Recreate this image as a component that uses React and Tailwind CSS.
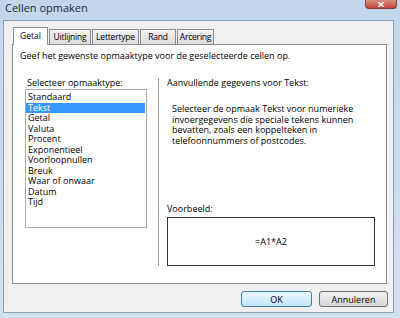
import React from 'react';

const font = { fontFamily: '"Open Sans", "Noto Sans", sans-serif' };

const types = [
  'Standaard', 'Tekst', 'Getal', 'Valuta', 'Procent', 'Exponentieel',
  'Voorloopnullen', 'Breuk', 'Waar of onwaar', 'Datum', 'Tijd',
];

// unselected tabs with their widths as measured from the picture
const tabs = [
  { label: 'Uitlijning', w: 'w-[42px]' },
  { label: 'Lettertype', w: 'w-[47px]' },
  { label: 'Rand', w: 'w-[36px]' },
  { label: 'Arcering', w: 'w-[37px]' },
];

export default function App() {
  return (
    <div
      className="w-[400px] h-[318px] overflow-hidden bg-gradient-to-b from-[#c3d5ea] to-[#d3e0ee] flex flex-col text-[9px] text-black"
      style={font}
    >
      {/* title bar */}
      <div className="h-[20px] flex items-start justify-between shrink-0">
        <span className="pl-[5px] pt-[1px] text-[11px] leading-[14px] text-[#1e2a38]">Cellen opmaken</span>
        <div className="mr-[3px] w-[32px] h-[9px] rounded-b-[4px] bg-gradient-to-b from-[#d98b7f] to-[#c2453a] border border-t-0 border-[#8a3a32] flex items-end justify-center pb-[1px]">
          <svg width="8" height="5" viewBox="0 0 8 5">
            <path d="M1 0 L4 2.5 L7 0 M1 5 L4 2.5 L7 5" stroke="white" strokeWidth="1.6" fill="none" />
          </svg>
        </div>
      </div>

      {/* dialog body */}
      <div className="mx-[3px] w-[391px] h-[293px] bg-[#f0f0f0] border border-[#8d9fb4] flex flex-col">
        {/* tabs */}
        <div className="flex items-end h-[23px] pl-[9px] shrink-0 text-[8.5px]">
          <div className="relative z-10 w-[35px] h-[18px] -mb-px bg-white border border-b-0 border-[#898c95] flex items-center justify-center leading-none">
            Getal
          </div>
          {tabs.map((t) => (
            <div
              key={t.label}
              className={`${t.w} h-[15px] ml-[1px] bg-gradient-to-b from-[#f2f2f2] to-[#dcdcdc] border border-b-0 border-[#898c95] flex items-center justify-center leading-none tracking-[-0.2px]`}
            >
              {t.label}
            </div>
          ))}
        </div>

        {/* panel */}
        <div className="ml-[8px] w-[375px] h-[240px] bg-white border border-[#898c95] flex flex-col">
          <p className="pl-[7px] pt-[5px] leading-[11px]">
            Geef het gewenste opmaaktype voor de geselecteerde cellen op.
          </p>

          <div className="flex mt-[16px]">
            {/* left column */}
            <div className="w-[145px] pl-[12px] shrink-0">
              <p className="pl-[2px] leading-[11px]">Selecteer opmaaktype:</p>
              <div className="mt-px w-[122px] h-[139px] border border-[#a5acb5] pt-[2px]">
                {types.map((t) => (
                  <div
                    key={t}
                    className={
                      t === 'Tekst'
                        ? 'h-[10.5px] leading-[10.5px] pl-[2px] mr-px bg-[#3399ff] text-white'
                        : 'h-[10.5px] leading-[10.5px] pl-[2px]'
                    }
                  >
                    {t}
                  </div>
                ))}
              </div>
            </div>

            {/* right column */}
            <div className="mt-px border-l border-[#a0a0a0] pl-[8px] h-[188px] flex flex-col">
              <p className="-mt-px leading-[11px]">Aanvullende gegevens voor Tekst:</p>
              <p className="mt-[16px] pl-[5px] leading-[10.7px] w-[200px]">
                Selecteer de opmaak Tekst voor numerieke
                <br />
                invoergegevens die speciale tekens kunnen
                <br />
                bevatten, zoals een koppelteken in
                <br />
                telefoonnummers of postcodes.
              </p>
              <p className="mt-auto leading-[11px]">Voorbeeld:</p>
              <div className="mt-[3px] w-[208px] h-[49px] border border-[#333333] flex items-center justify-center">
                =A1*A2
              </div>
            </div>
          </div>
        </div>

        {/* buttons */}
        <div className="flex justify-end gap-[7px] pr-[5px] mt-[7px]">
          <button className="w-[71px] h-[16px] rounded-[3px] border border-[#3c7fb1] bg-gradient-to-b from-[#eaf6fd] to-[#bee6fd] leading-none text-[9px]">
            OK
          </button>
          <button className="w-[69px] h-[16px] rounded-[3px] border border-[#707070] bg-gradient-to-b from-[#f2f2f2] to-[#d5d5d5] leading-none text-[9px]">
            Annuleren
          </button>
        </div>
      </div>
    </div>
  );
}
